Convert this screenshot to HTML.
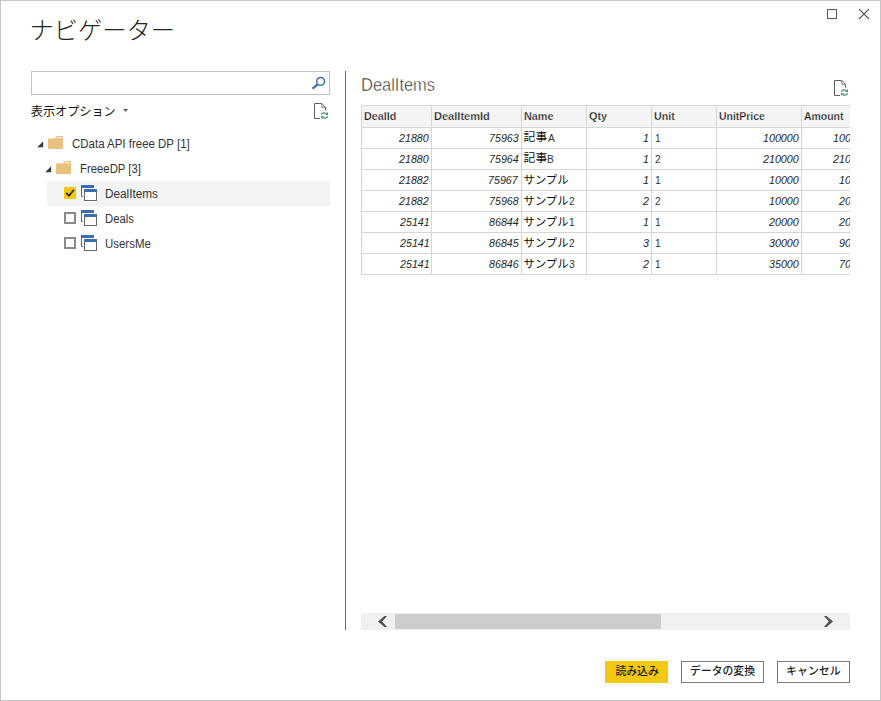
<!DOCTYPE html>
<html lang="ja"><head><meta charset="utf-8"><title>ナビゲーター</title>
<style>
html,body{margin:0;padding:0;background:#fff}
body{width:881px;height:701px;position:relative;overflow:hidden;font-family:"Liberation Sans",sans-serif;color:#252423}
.a{position:absolute}
#frame{left:0;top:0;width:879px;height:699px;border:1px solid #c6c6c6}
.t{position:absolute;white-space:nowrap;line-height:1}
.j{font-family:"Liberation Sans","Noto Sans CJK JP",sans-serif}
.tree{font-size:12px;color:#333}
.h{font-size:11px;font-weight:bold;color:#222;-webkit-text-stroke:0.25px #f4f4f4}
.n{font-size:11px;font-style:italic;color:#262626}
.c{font-size:11px;color:#333}
.pt{color:#262626;-webkit-text-stroke:0.45px #fff}
.vl{position:absolute;width:1px;background:#d6d6d6;top:0}
.hl{position:absolute;height:1px;background:#d6d6d6;left:0}
.btn{position:absolute;top:661px;height:20px;border:1px solid #7a7a7a;background:#fff}
</style></head>
<body>
<div id="frame" class="a"></div>
<svg class="a" style="left:826px;top:8px" width="46" height="14" viewBox="0 0 46 14"><rect x="1.5" y="1.5" width="9" height="9" fill="none" stroke="#5a5a5a" stroke-width="1"/><path d="M33 1 L43 11 M43 1 L33 11" stroke="#5a5a5a" stroke-width="1.1" fill="none"/></svg>
<span class="t j" style="left:29.4px;top:19.24px;font-size:24.3px;font-weight:300;color:#222;">ナビゲーター</span>
<div class="a" style="left:31px;top:71px;width:297px;height:22px;border:1px solid #c2c2c2;background:#fff"></div>
<svg class="a" style="left:310px;top:75px" width="18" height="16" viewBox="0 0 18 16"><circle cx="10.6" cy="6.4" r="3.9" fill="none" stroke="#3b6db0" stroke-width="1.5"/><path d="M7.6 9.4 L2.6 13.6" stroke="#3b6db0" stroke-width="2.2" stroke-linecap="butt"/></svg>
<span class="t j" style="left:30.76px;top:105.8px;font-size:12.15px;color:#161616;">表示オプション</span>
<svg class="a" style="left:123px;top:109px" width="6" height="4" viewBox="0 0 6 4"><path d="M0 0 H5.2 L2.6 3.1 Z" fill="#666"/></svg>
<svg class="a" style="left:314px;top:103px" width="16" height="18" viewBox="0 0 16 18"><path d="M6 15.5 H0.5 V0.5 H7.8 L11.5 4.3 V7.6" fill="none" stroke="#606060" stroke-width="1"/><path d="M7.8 0.5 V4.4 H11.5" fill="none" stroke="#777" stroke-width="0.9"/><path d="M7.3 11.7 C8.4 9.7 10.6 9.5 12.2 10.5" fill="none" stroke="#3f9477" stroke-width="1.25"/><path d="M14 9 V12.1 H10.9 Z" fill="#3f9477"/><path d="M13.8 13.4 C12.7 15.4 10.5 15.6 8.9 14.6" fill="none" stroke="#3f9477" stroke-width="1.25"/><path d="M7.1 16.1 V13 H10.2 Z" fill="#3f9477"/></svg>
<svg class="a" style="left:834px;top:80px" width="16" height="18" viewBox="0 0 16 18"><path d="M6 15.5 H0.5 V0.5 H7.8 L11.5 4.3 V7.6" fill="none" stroke="#606060" stroke-width="1"/><path d="M7.8 0.5 V4.4 H11.5" fill="none" stroke="#777" stroke-width="0.9"/><path d="M7.3 11.7 C8.4 9.7 10.6 9.5 12.2 10.5" fill="none" stroke="#3f9477" stroke-width="1.25"/><path d="M14 9 V12.1 H10.9 Z" fill="#3f9477"/><path d="M13.8 13.4 C12.7 15.4 10.5 15.6 8.9 14.6" fill="none" stroke="#3f9477" stroke-width="1.25"/><path d="M7.1 16.1 V13 H10.2 Z" fill="#3f9477"/></svg>
<svg class="a" style="left:37px;top:141px" width="7" height="7" viewBox="0 0 7 7"><path d="M6.2 0.2 V6.2 H0.2 Z" fill="#3c3c3c"/></svg>
<svg class="a" style="left:48px;top:136px" width="15" height="13" viewBox="0 0 15 13"><path d="M0 2.6 H6.6 L9 0 H15 V13 H0 Z" fill="#e8c07f"/><path d="M9.6 1 H14 V2.2 H8.5 Z" fill="#fbf3e4"/></svg>
<span class="t tree" id="t1" style="left:72.02px;top:137.84px;transform-origin:0 0;transform:scaleX(0.9560);">CData API freee DP [1]</span>
<svg class="a" style="left:45px;top:166px" width="7" height="7" viewBox="0 0 7 7"><path d="M6.2 0.2 V6.2 H0.2 Z" fill="#3c3c3c"/></svg>
<svg class="a" style="left:56px;top:161px" width="15" height="13" viewBox="0 0 15 13"><path d="M0 2.6 H6.6 L9 0 H15 V13 H0 Z" fill="#e8c07f"/><path d="M9.6 1 H14 V2.2 H8.5 Z" fill="#fbf3e4"/></svg>
<span class="t tree" id="t2" style="left:79.77px;top:162.64px;transform-origin:0 0;transform:scaleX(0.9451);">FreeeDP [3]</span>
<div class="a" style="left:47px;top:181px;width:283px;height:25px;background:#f3f3f3"></div>
<svg class="a" style="left:64px;top:187px" width="12" height="12" viewBox="0 0 12 12"><rect width="12" height="12" fill="#f2c811"/><path d="M2.2 5.9 L5 8.8 L9.9 2.7" fill="none" stroke="#252423" stroke-width="1.7"/></svg>
<svg class="a" style="left:81px;top:185px" width="17" height="17" viewBox="0 0 17 17"><path d="M0.5 3 V11.5 H2.5" fill="none" stroke="#666" stroke-width="1"/><rect x="0" y="0" width="13" height="3" fill="#3b6db0"/><rect x="2.5" y="3.5" width="14" height="13" fill="#fff" stroke="#fff" stroke-width="1"/><rect x="3.5" y="6.5" width="12" height="9" fill="#fff" stroke="#666" stroke-width="1"/><rect x="3" y="4" width="13" height="3" fill="#3b6db0"/></svg>
<span class="t tree" id="t3" style="left:105.03px;top:187.54px;transform-origin:0 0;transform:scaleX(0.9810);">DealItems</span>
<div class="a" style="left:64px;top:212px;width:8px;height:8px;border:2px solid #8a8a8a;background:#fff"></div>
<svg class="a" style="left:81px;top:210px" width="17" height="17" viewBox="0 0 17 17"><path d="M0.5 3 V11.5 H2.5" fill="none" stroke="#666" stroke-width="1"/><rect x="0" y="0" width="13" height="3" fill="#3b6db0"/><rect x="2.5" y="3.5" width="14" height="13" fill="#fff" stroke="#fff" stroke-width="1"/><rect x="3.5" y="6.5" width="12" height="9" fill="#fff" stroke="#666" stroke-width="1"/><rect x="3" y="4" width="13" height="3" fill="#3b6db0"/></svg>
<span class="t tree" id="t4" style="left:105.07px;top:212.54px;transform-origin:0 0;transform:scaleX(0.9398);">Deals</span>
<div class="a" style="left:64px;top:237px;width:8px;height:8px;border:2px solid #8a8a8a;background:#fff"></div>
<svg class="a" style="left:81px;top:235px" width="17" height="17" viewBox="0 0 17 17"><path d="M0.5 3 V11.5 H2.5" fill="none" stroke="#666" stroke-width="1"/><rect x="0" y="0" width="13" height="3" fill="#3b6db0"/><rect x="2.5" y="3.5" width="14" height="13" fill="#fff" stroke="#fff" stroke-width="1"/><rect x="3.5" y="6.5" width="12" height="9" fill="#fff" stroke="#666" stroke-width="1"/><rect x="3" y="4" width="13" height="3" fill="#3b6db0"/></svg>
<span class="t tree" id="t5" style="left:105.12px;top:237.54px;transform-origin:0 0;transform:scaleX(0.9539);">UsersMe</span>
<div class="a" style="left:345px;top:71px;width:1px;height:559px;background:#6b6b6b"></div>
<span class="t pt" id="pt" style="left:360.85px;top:76.89px;font-size:17.5px;transform-origin:0 0;transform:scaleX(0.9399);">DealItems</span>
<div class="a" id="tbl" style="left:361px;top:105px;width:489px;height:170px;overflow:hidden"><div class="a" style="left:0;top:0;width:520px;height:170px"><div class="a" style="left:0;top:0;width:520px;height:22px;background:#f4f4f4"></div><div class="vl" style="left:0px;height:170px"></div><div class="vl" style="left:70px;height:170px"></div><div class="vl" style="left:160px;height:170px"></div><div class="vl" style="left:225px;height:170px"></div><div class="vl" style="left:290px;height:170px"></div><div class="vl" style="left:355px;height:170px"></div><div class="vl" style="left:440px;height:170px"></div><div class="vl" style="left:510px;height:170px"></div><div class="hl" style="top:0px;width:520px"></div><div class="hl" style="top:22px;width:520px"></div><div class="hl" style="top:43px;width:520px"></div><div class="hl" style="top:64px;width:520px"></div><div class="hl" style="top:85px;width:520px"></div><div class="hl" style="top:106px;width:520px"></div><div class="hl" style="top:127px;width:520px"></div><div class="hl" style="top:148px;width:520px"></div><div class="hl" style="top:169px;width:520px"></div><span class="t h" id="h0" style="left:2.78px;top:5.69px;transform-origin:0 0;transform:scaleX(0.9762);">DealId</span><span class="t h" id="h1" style="left:72.76px;top:5.69px;transform-origin:0 0;transform:scaleX(1.0043);">DealItemId</span><span class="t h" id="h2" style="left:162.98px;top:5.69px;transform-origin:0 0;transform:scaleX(0.9845);">Name</span><span class="t h" id="h3" style="left:227.85px;top:5.69px;transform-origin:0 0;transform:scaleX(0.9873);">Qty</span><span class="t h" id="h4" style="left:293.06px;top:5.69px;transform-origin:0 0;transform:scaleX(0.9715);">Unit</span><span class="t h" id="h5" style="left:358.07px;top:5.69px;transform-origin:0 0;transform:scaleX(0.9481);">UnitPrice</span><span class="t h" id="h6" style="left:443.24px;top:5.69px;transform-origin:0 0;transform:scaleX(0.9505);">Amount</span><span class="t n" style="left:37.76px;top:27.94px;transform-origin:0 0;transform:scaleX(0.9720)">21880</span><span class="t n" style="left:127.76px;top:27.94px;transform-origin:0 0;transform:scaleX(0.9720)">75963</span><span class="t j" style="left:162.6px;top:27.29px;font-size:11.8px;color:#0a0a0a;">記事</span><span class="t c" style="left:187.28px;top:27.94px;transform-origin:0 0;transform:scaleX(0.9300)">A</span><span class="t n" style="left:282.36px;top:27.94px;transform-origin:0 0;transform:scaleX(0.9720)">1</span><span class="t c" style="left:293.52px;top:27.94px;transform-origin:0 0;transform:scaleX(0.9300)">1</span><span class="t n" style="left:401.81px;top:27.94px;transform-origin:0 0;transform:scaleX(0.9720)">100000</span><span class="t n" style="left:471.81px;top:27.94px;transform-origin:0 0;transform:scaleX(0.9720)">100000</span><span class="t n" style="left:37.76px;top:48.94px;transform-origin:0 0;transform:scaleX(0.9720)">21880</span><span class="t n" style="left:128.07px;top:48.94px;transform-origin:0 0;transform:scaleX(0.9720)">75964</span><span class="t j" style="left:162.6px;top:48.29px;font-size:11.8px;color:#0a0a0a;">記事</span><span class="t c" style="left:186.46px;top:48.94px;transform-origin:0 0;transform:scaleX(0.9300)">B</span><span class="t n" style="left:282.36px;top:48.94px;transform-origin:0 0;transform:scaleX(0.9720)">1</span><span class="t c" style="left:293.79px;top:48.94px;transform-origin:0 0;transform:scaleX(0.9300)">2</span><span class="t n" style="left:401.81px;top:48.94px;transform-origin:0 0;transform:scaleX(0.9720)">210000</span><span class="t n" style="left:471.81px;top:48.94px;transform-origin:0 0;transform:scaleX(0.9720)">210000</span><span class="t n" style="left:37.82px;top:69.94px;transform-origin:0 0;transform:scaleX(0.9720)">21882</span><span class="t n" style="left:127.34px;top:69.94px;transform-origin:0 0;transform:scaleX(0.9720)">75967</span><span class="t j" style="left:162.6px;top:69.81px;font-size:11.3px;color:#0a0a0a;">サンプル</span><span class="t n" style="left:282.36px;top:69.94px;transform-origin:0 0;transform:scaleX(0.9720)">1</span><span class="t c" style="left:293.52px;top:69.94px;transform-origin:0 0;transform:scaleX(0.9300)">1</span><span class="t n" style="left:407.76px;top:69.94px;transform-origin:0 0;transform:scaleX(0.9720)">10000</span><span class="t n" style="left:477.76px;top:69.94px;transform-origin:0 0;transform:scaleX(0.9720)">10000</span><span class="t n" style="left:37.82px;top:90.94px;transform-origin:0 0;transform:scaleX(0.9720)">21882</span><span class="t n" style="left:127.73px;top:90.94px;transform-origin:0 0;transform:scaleX(0.9720)">75968</span><span class="t j" style="left:162.6px;top:90.81px;font-size:11.3px;color:#0a0a0a;">サンプル</span><span class="t c" style="left:207.79px;top:90.94px;transform-origin:0 0;transform:scaleX(0.9300)">2</span><span class="t n" style="left:281.61px;top:90.94px;transform-origin:0 0;transform:scaleX(0.9720)">2</span><span class="t c" style="left:293.79px;top:90.94px;transform-origin:0 0;transform:scaleX(0.9300)">2</span><span class="t n" style="left:407.76px;top:90.94px;transform-origin:0 0;transform:scaleX(0.9720)">10000</span><span class="t n" style="left:477.76px;top:90.94px;transform-origin:0 0;transform:scaleX(0.9720)">20000</span><span class="t n" style="left:38.57px;top:111.94px;transform-origin:0 0;transform:scaleX(0.9720)">25141</span><span class="t n" style="left:128.07px;top:111.94px;transform-origin:0 0;transform:scaleX(0.9720)">86844</span><span class="t j" style="left:162.6px;top:111.81px;font-size:11.3px;color:#0a0a0a;">サンプル</span><span class="t c" style="left:207.52px;top:111.94px;transform-origin:0 0;transform:scaleX(0.9300)">1</span><span class="t n" style="left:282.36px;top:111.94px;transform-origin:0 0;transform:scaleX(0.9720)">1</span><span class="t c" style="left:293.52px;top:111.94px;transform-origin:0 0;transform:scaleX(0.9300)">1</span><span class="t n" style="left:407.76px;top:111.94px;transform-origin:0 0;transform:scaleX(0.9720)">20000</span><span class="t n" style="left:477.76px;top:111.94px;transform-origin:0 0;transform:scaleX(0.9720)">20000</span><span class="t n" style="left:38.57px;top:132.94px;transform-origin:0 0;transform:scaleX(0.9720)">25141</span><span class="t n" style="left:127.64px;top:132.94px;transform-origin:0 0;transform:scaleX(0.9720)">86845</span><span class="t j" style="left:162.6px;top:132.81px;font-size:11.3px;color:#0a0a0a;">サンプル</span><span class="t c" style="left:207.79px;top:132.94px;transform-origin:0 0;transform:scaleX(0.9300)">2</span><span class="t n" style="left:281.55px;top:132.94px;transform-origin:0 0;transform:scaleX(0.9720)">3</span><span class="t c" style="left:293.52px;top:132.94px;transform-origin:0 0;transform:scaleX(0.9300)">1</span><span class="t n" style="left:407.76px;top:132.94px;transform-origin:0 0;transform:scaleX(0.9720)">30000</span><span class="t n" style="left:477.76px;top:132.94px;transform-origin:0 0;transform:scaleX(0.9720)">90000</span><span class="t n" style="left:38.57px;top:153.94px;transform-origin:0 0;transform:scaleX(0.9720)">25141</span><span class="t n" style="left:127.67px;top:153.94px;transform-origin:0 0;transform:scaleX(0.9720)">86846</span><span class="t j" style="left:162.6px;top:153.81px;font-size:11.3px;color:#0a0a0a;">サンプル</span><span class="t c" style="left:207.91px;top:153.94px;transform-origin:0 0;transform:scaleX(0.9300)">3</span><span class="t n" style="left:281.61px;top:153.94px;transform-origin:0 0;transform:scaleX(0.9720)">2</span><span class="t c" style="left:293.52px;top:153.94px;transform-origin:0 0;transform:scaleX(0.9300)">1</span><span class="t n" style="left:407.76px;top:153.94px;transform-origin:0 0;transform:scaleX(0.9720)">35000</span><span class="t n" style="left:477.76px;top:153.94px;transform-origin:0 0;transform:scaleX(0.9720)">70000</span></div></div>
<div class="a" style="left:361px;top:613px;width:489px;height:17px;background:#f0f0f0"></div>
<div class="a" style="left:395px;top:614px;width:266px;height:15px;background:#cdcdcd"></div>
<svg class="a" style="left:377px;top:615px" width="12" height="13" viewBox="0 0 12 13"><path d="M1 6.5 L7.5 1 H10 L5.2 6.5 L10 12 H7.5 Z" fill="#505050"/></svg>
<svg class="a" style="left:822px;top:615px" width="12" height="13" viewBox="0 0 12 13"><path d="M11 6.5 L4.5 1 H2 L6.8 6.5 L2 12 H4.5 Z" fill="#505050"/></svg>
<div class="a" style="left:605px;top:661px;width:63px;height:22px;background:#f2c811"></div>
<span class="t j" style="left:615.5px;top:665.97px;font-size:10.8px;font-weight:500;color:#1a1a1a;">読み込み</span>
<div class="btn" style="left:681px;width:81px"></div>
<span class="t j" style="left:689.95px;top:666.17px;font-size:10.85px;font-weight:500;color:#1c1c1c;">データの変換</span>
<div class="btn" style="left:777px;width:71px"></div>
<span class="t j" style="left:786.1px;top:666.04px;font-size:10.9px;font-weight:500;color:#1c1c1c;">キャンセル</span>
</body></html>
